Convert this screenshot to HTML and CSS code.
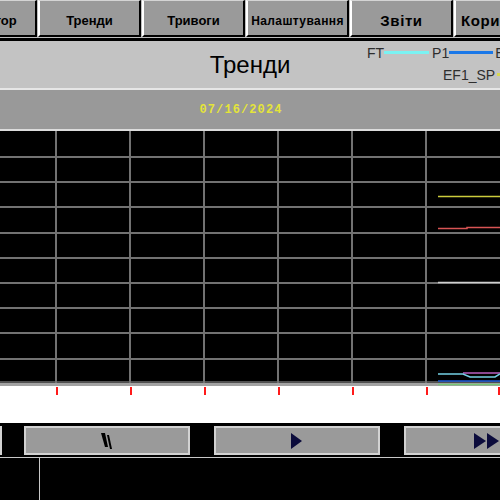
FILE: index.html
```html
<!DOCTYPE html>
<html lang="uk">
<head>
<meta charset="utf-8">
<title>Тренди</title>
<link rel="stylesheet" href="styles.css">
</head>
<body>
<nav class="topnav">
  <div class="tab">Оператор</div>
  <div class="tab">Тренди</div>
  <div class="tab">Тривоги</div>
  <div class="tab tab-narrow">Налаштування</div>
  <div class="tab tab-big">Звіти</div>
  <div class="tab tab-big tab-last">Користувачі</div>
</nav>
<div class="rule"></div>
<header class="header">
  <div></div>
  <div class="title">Тренди</div>
  <div class="legend">
    <div class="legend-row"><span>FT</span><i class="swatch sw-cyan"></i><span>P1</span><i class="swatch sw-blue"></i><span>EF</span></div>
    <div class="legend-row legend-row2"><span>EF1_SP</span><i class="swatch sw-yellow"></i></div>
  </div>
</header>
<div class="dateband"><span class="date">07/16/2024</span></div>
<svg class="chart" width="500" height="292" viewBox="0 0 500 292">
  <rect x="0" y="0" width="500" height="250" fill="#000"/>
  <rect x="0" y="250" width="500" height="2" fill="#505050"/>
  <rect x="0" y="252" width="500" height="3" fill="#a2a2a2"/>
  <rect x="0" y="255" width="500" height="37" fill="#fff"/>
  <g fill="#727272">
    <rect x="0" y="25" width="500" height="2"/>
    <rect x="0" y="50" width="500" height="2"/>
    <rect x="0" y="75" width="500" height="2"/>
    <rect x="0" y="101" width="500" height="2"/>
    <rect x="0" y="126" width="500" height="2"/>
    <rect x="0" y="151" width="500" height="2"/>
    <rect x="0" y="176" width="500" height="2"/>
    <rect x="0" y="201" width="500" height="2"/>
    <rect x="0" y="227" width="500" height="2"/>
    <rect x="55" y="0" width="2" height="252"/>
    <rect x="129" y="0" width="2" height="252"/>
    <rect x="203" y="0" width="2" height="252"/>
    <rect x="277" y="0" width="2" height="252"/>
    <rect x="351" y="0" width="2" height="252"/>
    <rect x="425" y="0" width="2" height="252"/>
  </g>
  <g fill="#ff1a1a">
    <rect x="56" y="256" width="2" height="8"/>
    <rect x="130" y="256" width="2" height="8"/>
    <rect x="204" y="256" width="2" height="8"/>
    <rect x="278" y="256" width="2" height="8"/>
    <rect x="352" y="256" width="2" height="8"/>
    <rect x="426" y="256" width="2" height="8"/>
    <rect x="498" y="256" width="2" height="8"/>
  </g>
  <g fill="none" stroke-width="1.5">
    <path d="M438 65.5H500" stroke="#cccc3c"/>
    <path d="M438 97.5H467V96.5H500" stroke="#d85454"/>
    <path d="M438 151.5H500" stroke="#cfcfcf"/>
    <path d="M463 242H500" stroke="#b85ec0"/>
    <path d="M438 243H463L470 246H495L500 243" stroke="#74d0e4"/>
    <path d="M438 250H500" stroke="#1a5ad8"/>
    <path d="M438 253.5H500" stroke="#76c878"/>
  </g>
</svg>
<div class="controls">
  <div class="cbtn cbtn-stub"></div>
  <div class="cbtn">
    <svg width="14" height="18" viewBox="0 0 14 18"><polygon points="1,1 5,1 8,15 5,15" fill="#000"/><polygon points="7,3 9,3 12,17 10,17" fill="#000"/></svg>
  </div>
  <div class="cbtn">
    <svg width="12" height="16" viewBox="0 0 12 16"><polygon points="0,0 11,8 0,16" fill="#0c0c3c"/></svg>
  </div>
  <div class="cbtn">
    <svg width="26" height="16" viewBox="0 0 26 16"><polygon points="0,0 12,8 0,16" fill="#0c0c3c"/><polygon points="13,0 25,8 13,16" fill="#0c0c3c"/></svg>
  </div>
</div>
<footer class="footer">
  <div class="fcell"></div>
  <div class="fmain"></div>
</footer>
</body>
</html>
```

FILE: styles.css
```css
html, body {
  margin: 0;
  padding: 0;
}
body {
  width: 500px;
  height: 500px;
  overflow: hidden;
  background: #000;
  font-family: "Liberation Sans", Arial, sans-serif;
}
.topnav {
  display: flex;
  gap: 1px;
  margin-left: -66px;
  height: 38px;
  background: #bdbdbd;
}
.tab {
  flex: none;
  box-sizing: border-box;
  width: 103px;
  height: 37px;
  padding-top: 5px;
  background: #9a9a9a;
  border-top: 1px solid #d4d4d4;
  border-left: 2px solid #fff;
  border-right: 2px solid #000;
  border-bottom: 2px solid #000;
  display: flex;
  align-items: center;
  justify-content: center;
  font-size: 13px;
  font-weight: bold;
  color: #000;
  white-space: nowrap;
  overflow: hidden;
}
.tab-narrow {
  font-size: 12px;
  letter-spacing: 0.4px;
}
.tab-big {
  font-size: 15px;
  letter-spacing: 0.6px;
}
.tab-last {
  justify-content: flex-start;
  padding-left: 5px;
}
.rule {
  height: 3px;
  background: #000;
}
.header {
  display: grid;
  grid-template-columns: 167px 166px 167px;
  height: 47px;
  background: #c3c3c3;
  overflow: hidden;
}
.title {
  text-align: center;
  font-size: 24px;
  line-height: 47px;
  color: #000;
}
.legend {
  padding: 4px 0 0 34px;
  display: flex;
  flex-direction: column;
  gap: 6px;
  font-size: 14px;
  line-height: 16px;
  color: #2e2e2e;
  white-space: nowrap;
}
.legend-row {
  display: flex;
  align-items: center;
}
.legend-row2 {
  padding-left: 76px;
}
.swatch {
  display: block;
  flex: none;
  height: 3px;
  margin-top: -2px;
}
.sw-cyan {
  width: 45px;
  margin-right: 3px;
  background: #7af2f2;
}
.sw-blue {
  width: 44px;
  margin-right: 2px;
  background: #1a78e8;
}
.sw-yellow {
  width: 20px;
  margin-left: 2px;
  background: #d8d850;
}
.dateband {
  box-sizing: border-box;
  height: 43px;
  border-top: 2px solid #e6e6e6;
  border-bottom: 2px solid #dcdcdc;
  background: #999;
  display: flex;
  align-items: center;
  justify-content: center;
  padding-right: 18px;
}
.date {
  font-family: "Liberation Mono", "DejaVu Sans Mono", monospace;
  font-size: 12px;
  font-weight: bold;
  letter-spacing: 1.1px;
  color: #e4e43a;
}
.chart {
  display: block;
}
.controls {
  display: flex;
  gap: 24px;
  margin-left: -143px;
  height: 34px;
  padding-top: 3px;
  box-sizing: border-box;
  background: #000;
}
.cbtn {
  flex: none;
  box-sizing: border-box;
  width: 166px;
  height: 29px;
  background: #9a9a9a;
  border: 2px solid #d2d2d2;
  display: flex;
  align-items: center;
  justify-content: center;
}
.cbtn-stub {
  width: 145px;
  margin-right: -2px;
}
.footer {
  display: flex;
  height: 43px;
  border-top: 1px solid #c8c8c8;
  background: #000;
}
.fcell {
  width: 39px;
  border-right: 1px solid #c8c8c8;
}
.fmain {
  flex: 1;
}
```
